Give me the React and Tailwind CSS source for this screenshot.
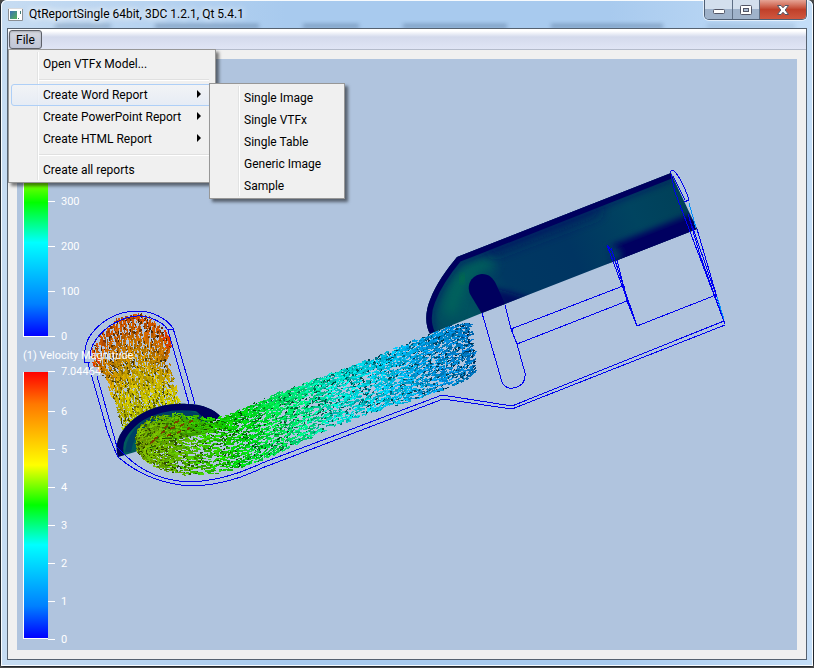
import React from 'react';

const REPORT_ITEMS = ['Single Image', 'Single VTFx', 'Single Table', 'Generic Image', 'Sample'];

const PRESSURE_TICKS = [
  { label: '300', y: 201 },
  { label: '200', y: 246 },
  { label: '100', y: 291 },
  { label: '0', y: 336 },
];

const VELOCITY_TICKS = [
  { label: '7.04464', y: 371 },
  { label: '6', y: 411 },
  { label: '5', y: 449 },
  { label: '4', y: 487 },
  { label: '3', y: 525 },
  { label: '2', y: 563 },
  { label: '1', y: 601 },
  { label: '0', y: 639 },
];

// left and right edge of the inlet flow, top to bottom
const INLET = {
  count: 56,
  step: 2,
  path: (v) => [
    [90 + 82 * v, 352 - 10 * v - 33 * Math.pow(Math.sin(Math.PI * v), 0.8)],
    [95 + 76 * v, 366 - 20 * v],
    [107 + 60 * v, 378 - 18 * v],
    [125 + 59 * v, 436 - 22 * v],
  ],
  colors: [
    [0, [228, 88, 0]],
    [0.2, [218, 118, 0]],
    [0.4, [218, 160, 0]],
    [0.6, [224, 200, 0]],
    [0.85, [212, 218, 0]],
    [1, [140, 205, 0]],
  ],
};

const PIPE_EDGES = [
  [136, 438, 137, 450],
  [140, 427, 148, 462],
  [152, 418, 162, 469],
  [175, 413, 185, 474],
  [200, 418, 208, 474],
  [220, 418, 234, 469],
  [240, 411, 260, 461],
  [260, 402, 284, 450],
  [280, 393, 310, 438],
  [310, 382, 340, 425],
  [340, 371, 372, 413],
  [380, 356, 408, 401],
  [420, 339, 440, 391],
  [450, 326, 462, 382],
  [468, 323, 475, 373],
];

const PIPE = {
  count: 44,
  step: 2,
  path: (v) => PIPE_EDGES.map(([x1, y1, x2, y2]) => [x1 + (x2 - x1) * v, y1 + (y2 - y1) * v]),
  colors: [
    [0, [138, 190, 0]],
    [0.12, [104, 204, 0]],
    [0.22, [40, 222, 0]],
    [0.3, [0, 236, 10]],
    [0.4, [0, 248, 80]],
    [0.5, [0, 250, 150]],
    [0.6, [0, 246, 230]],
    [0.74, [0, 214, 255]],
    [0.86, [0, 172, 250]],
    [1, [0, 125, 210]],
  ],
};

function createRandom(seed) {
  let s = seed;
  return () => {
    s = (s * 1664525 + 1013904223) % 4294967296;
    return s / 4294967296;
  };
}

function colorAt(stops, t) {
  for (let i = 1; i < stops.length; i++) {
    if (t <= stops[i][0]) {
      const [t0, a] = stops[i - 1];
      const [t1, b] = stops[i];
      const f = (t - t0) / (t1 - t0);
      return a.map((c, k) => c + (b[k] - c) * f);
    }
  }
  return stops[stops.length - 1][1];
}

function buildFlow(flow, seed, gap) {
  const rand = createRandom(seed);
  const arrows = [];
  for (let i = 0; i < flow.count; i++) {
    const v = (i + 0.5) / flow.count;
    const points = flow.path(v);
    const lengths = points.slice(1).map((p, k) => Math.hypot(p[0] - points[k][0], p[1] - points[k][1]));
    const total = lengths.reduce((a, b) => a + b, 0);
    let walked = 0;
    lengths.forEach((len, k) => {
      const [x0, y0] = points[k];
      const dx = (points[k + 1][0] - x0) / len;
      const dy = (points[k + 1][1] - y0) / len;
      for (let d = 0; d < len; d += flow.step) {
        const t = (walked + d) / total;
        if (rand() < gap(t, v)) continue;
        const dark = rand() < 0.27;
        const shade = dark ? 0.28 + rand() * 0.35 : 0.74 + rand() * 0.3;
        const size = dark ? 1 + rand() * 2 : 2 + rand() * 4;
        const x = x0 + dx * d + (rand() - 0.5) * 3;
        const y = y0 + dy * d + (rand() - 0.5) * 3;
        const turn = (rand() - 0.5) * 0.5;
        const base = colorAt(flow.colors, Math.min(1, Math.max(0, t + (rand() - 0.5) * 0.05)));
        const rgb = base.map((c) => Math.min(255, Math.round((c * shade) / 12) * 12));
        const seg = `M${x.toFixed(1)} ${y.toFixed(1)}l${((dx - dy * turn) * size).toFixed(1)} ${((dy + dx * turn) * size).toFixed(1)}`;
        arrows.push({ color: `rgb(${rgb.join(',')})`, seg, order: rand() });
      }
      walked += len;
    });
  }
  // mix the depth so that light and dark arrows cover each other
  return arrows.sort((a, b) => a.order - b.order);
}

const inletArrows = buildFlow(INLET, 7, (t, v) => {
  if (t < 0.3) return Math.floor(v * 56) % 5 === 0 ? 0.85 : 0.15;
  return 0.3;
});

const pipeArrows = buildFlow(PIPE, 21, (t, v) => {
  if (t < 0.12 || v < 0.2) return 0.08;
  if (t > 0.78) return Math.floor(v * 44) % 5 === 1 ? 0.85 : 0.3;
  return Math.floor(v * 44 + t * 3) % 4 === 1 ? 0.85 : 0.42;
});

function Arrows({ items }) {
  return (
    <g fill="none" strokeWidth="1.4" shapeRendering="crispEdges">
      {items.map(({ color, seg }, i) => (
        <path key={i} d={seg} stroke={color} />
      ))}
    </g>
  );
}

function Legend({ top, bottom, ticks }) {
  return (
    <g>
      <rect x="24" y={top} width="24" height={bottom - top} fill="url(#rainbow)" />
      <path d={`M23.5 ${top}V${bottom}M23 ${bottom + 0.5}H48`} stroke="#fff" fill="none" />
      {ticks.map(({ label, y }) => (
        <g key={label}>
          <path d={`M48 ${y + 0.5}H55`} stroke="#fff" />
          <text x="61" y={y + 4}>{label}</text>
        </g>
      ))}
    </g>
  );
}

function Scene() {
  return (
    <svg
      viewBox="17 59 780 591"
      preserveAspectRatio="xMinYMin meet"
      className="block h-auto w-full"
      role="img"
      aria-label="Velocity Magnitude"
    >
      <defs>
        <linearGradient id="rainbow" x1="0" y1="0" x2="0" y2="1">
          <stop offset="0" stopColor="#ff0000" />
          <stop offset="0.12" stopColor="#ff7800" />
          <stop offset="0.35" stopColor="#ffff00" />
          <stop offset="0.5" stopColor="#00ff00" />
          <stop offset="0.65" stopColor="#00ffff" />
          <stop offset="0.88" stopColor="#0080ff" />
          <stop offset="1" stopColor="#0000ff" />
        </linearGradient>
        <linearGradient id="cut" gradientUnits="userSpaceOnUse" x1="430" y1="320" x2="690" y2="200">
          <stop offset="0" stopColor="#004a60" />
          <stop offset="0.14" stopColor="#005260" />
          <stop offset="0.3" stopColor="#003862" />
          <stop offset="0.55" stopColor="#003562" />
          <stop offset="0.8" stopColor="#004460" />
          <stop offset="1" stopColor="#004058" />
        </linearGradient>
        <filter id="soft" x="-20%" y="-20%" width="140%" height="140%">
          <feGaussianBlur stdDeviation="3" />
        </filter>
        <filter id="softer" x="-50%" y="-50%" width="200%" height="200%">
          <feGaussianBlur stdDeviation="6" />
        </filter>
        <clipPath id="body">
          <path d="M457 257L671 173L697 229L482 313L430 334C425 325 425 312 430 300C436 284 447 269 457 257Z" />
        </clipPath>
        <clipPath id="elbow">
          <path d="M118 457C113 440 123 428 135 418C150 407 170 403 187 404C203 404 215 410 221 417L200 425L135 452Z" />
        </clipPath>
      </defs>

      {/* outlet cut plane */}
      <g clipPath="url(#body)">
        <rect x="420" y="165" width="285" height="175" fill="url(#cut)" />
        <path d="M450 315Q454 285 472 270Q482 264 494 264" stroke="#006a5a" strokeWidth="9" fill="none" filter="url(#softer)" />
        <path d="M460 283L464 274" stroke="#007838" strokeWidth="3" filter="url(#soft)" />
        <path d="M490 252L600 210" stroke="#002060" strokeWidth="8" filter="url(#softer)" />
        <path d="M492 288L508 292L535 300L505 312Z" fill="#000c5e" filter="url(#soft)" />
        <path d="M612 245L690 214L705 228L612 268Z" fill="#000060" filter="url(#soft)" />
        <path d="M616 248L690 219L705 228L616 262Z" fill="#000060" />
        <path d="M606 245L620 248L622 260L606 264Z" fill="#003562" filter="url(#soft)" />
        <path d="M430 334C425 325 425 312 430 300C436 284 447 269 457 257L671 173" stroke="#000868" strokeWidth="16" fill="none" filter="url(#soft)" opacity="0.45" />
        <path d="M430 334C425 325 425 312 430 300C436 284 447 269 457 257L671 173" stroke="#00005e" strokeWidth="11" fill="none" />
        <path d="M482 314L470 294C466 284 472 275 482 274C489 274 493 278 496 284L506 306Z" fill="#00005e" />
      </g>

      <Arrows items={inletArrows} />
      <path
        d="M94 352l1 5M97 358l2 6M93 362l2 5M98 368l1 4M165 330l2 7M168 336l2 6M170 342l1 5M163 336l2 5M167 344l1 4"
        stroke="#e03800"
        strokeWidth="2"
        shapeRendering="crispEdges"
      />

      {/* elbow cut plane */}
      <g clipPath="url(#elbow)">
        <rect x="110" y="400" width="115" height="60" fill="#005a5c" />
        <path d="M128 452C130 432 150 412 180 411L208 420" stroke="#004064" strokeWidth="6" fill="none" />
        <path d="M118 457C113 440 123 428 135 418C150 407 170 403 187 404C203 404 215 410 221 417" stroke="#00005e" strokeWidth="13" fill="none" />
        <path d="M203 406L222 414L222 420L206 420L196 411Z" fill="#00005e" />
      </g>

      <path d="M137 442L150 424L172 417L205 422L222 424L205 434L170 440L150 452Z" fill="#3a9c00" />
      <Arrows items={pipeArrows} />
      <path
        d="M150 443l5-3M154 439l4-2M161 433l4-2M167 436l4-2M170 429l5-2M177 433l4-2M180 426l4-2M187 429l3-1M164 428l4-2M174 423l5-2M189 422l4-1"
        stroke="#7a4000"
        strokeWidth="2"
        shapeRendering="crispEdges"
      />

      {/* wireframe */}
      <g fill="none" stroke="#0000f0" strokeWidth="1" shapeRendering="crispEdges">
        <path d="M725 325L512 409L443 399L262 468Q228 485 193 486C163 485 138 474 118 457Q113 447 107 430L88 363L84 362C84 352 86 340 92 333C103 319 120 311 137 311C152 311 166 318 173 328L195 404" />
        <path d="M724 321L512 406L442 395L262 463Q225 481 190 482C162 481 140 470 125 455L117 447L97 376" />
        <path d="M84 362L90 362M90 356C90 342 105 326 121 320Q137 313 151 318Q164 323 168 330L189 404M168 330L173 329" />
        <path d="M482 313L502 382Q505 389 513 388Q526 386 525 373L517 344L511 329L505 305" />
        <path d="M511 329L623 286M517 344L627 301M510 326L513 331" />
        <path d="M607 245L637 326L627 301L617 260M607 245L611 250M611 248L623 285L637 326L716 295M622 282L625 288" />
        <path d="M670 173Q672 168 676 173Q684 184 689 200L684 202M673 176L685 200M671 174L675 192L725 324M688 214L716 295M688 214L700 255L725 324M697 229L724 321" />
      </g>
      <path d="M689 203L696 228M717 297L724 319" stroke="#0090ff" shapeRendering="crispEdges" />

      <g fill="#fff" fontSize="11" className="font-[Roboto,'Noto_Sans',sans-serif]">
        <Legend top={69} bottom={336} ticks={PRESSURE_TICKS} />
        <text x="23" y="359">(1) Velocity Magnitude</text>
        <Legend top={372} bottom={638} ticks={VELOCITY_TICKS} />
      </g>
    </svg>
  );
}

function MenuPanel({ children, className }) {
  return (
    <ul
      role="menu"
      className={`absolute border border-[#979797] bg-[#f0f0f0] px-[2px] pt-[3px] pb-px shadow-[3px_3px_3px_rgba(0,0,0,0.5)] ${className}`}
    >
      <li role="none" className="absolute inset-y-[2px] left-7 w-[2px] border-l border-[#e2e3e3] bg-white" />
      {children}
    </ul>
  );
}

function MenuItem({ label, active, submenu, children }) {
  return (
    <li role="none" className="relative">
      <button
        type="button"
        role="menuitem"
        aria-haspopup={submenu ? 'menu' : undefined}
        className={`relative flex h-[22px] w-full items-center justify-between rounded-[3px] border pr-[10px] pl-[31px] text-left whitespace-nowrap ${
          active ? 'border-[#aecff7] bg-linear-to-b from-[#f2f4f7]/80 to-[#e4ebf6]/80' : 'border-transparent'
        }`}
      >
        {label}
        {submenu && (
          <svg width="5" height="8" viewBox="0 0 5 8" className="-mt-[2px]" aria-hidden="true">
            <path d="M0 0L4 4L0 8Z" fill="#000" />
          </svg>
        )}
      </button>
      {children}
    </li>
  );
}

function Separator() {
  return <li role="separator" className="mt-1 mr-1 mb-[3px] ml-7 h-[2px] border-t border-[#e0e0e0] bg-white" />;
}

function FileMenu() {
  return (
    <MenuPanel className="top-full left-0 z-10 w-[208px]">
      <MenuItem label="Open VTFx Model..." />
      <Separator />
      <MenuItem label="Create Word Report" active submenu>
        <MenuPanel className="-top-px left-[198px] z-20 w-[136px]">
          {REPORT_ITEMS.map((item) => (
            <MenuItem key={item} label={item} />
          ))}
        </MenuPanel>
      </MenuItem>
      <MenuItem label="Create PowerPoint Report" submenu />
      <MenuItem label="Create HTML Report" submenu />
      <Separator />
      <MenuItem label="Create all reports" />
    </MenuPanel>
  );
}

function TitleBar() {
  return (
    <header className="relative flex h-[27px] items-start justify-between">
      {/* desktop showing through the glass */}
      <div className="absolute inset-x-0 bottom-0 flex h-2 gap-11 overflow-hidden pt-1 pl-12" aria-hidden="true">
        <span className="w-14 bg-[#4c6c90]/40 blur-[2px]" />
        <span className="w-26 bg-[#4c6c90]/50 blur-[2px]" />
        <span className="w-14 bg-[#4c6c90]/50 blur-[2px]" />
        <span className="w-26 bg-[#4c6c90]/50 blur-[2px]" />
        <span className="w-28 bg-[#4c6c90]/50 blur-[2px]" />
        <span className="w-22 bg-[#4c6c90]/20 blur-[2px]" />
      </div>
      <div className="relative flex items-center gap-[6px] pt-[4px]">
        <svg width="15" height="13" viewBox="0 0 15 13" className="ml-px" aria-hidden="true">
          <defs>
            <linearGradient id="appicon" x1="0" y1="0" x2="1" y2="1">
              <stop offset="0" stopColor="#3b70b8" />
              <stop offset="1" stopColor="#55b054" />
            </linearGradient>
          </defs>
          <path d="M0.5 0.5H14.5V12.5H0.5Z" fill="#fff" stroke="#8b8f94" />
          <path d="M0 0.5H15" stroke="#d8dadd" />
          <rect x="2" y="3" width="7" height="8" fill="url(#appicon)" />
          <path d="M10 10.5H11M12.5 3V6" stroke="#3f7a74" />
        </svg>
        <h1 className="text-xs leading-[18px] text-black [text-shadow:0_0_6px_#fff,0_0_10px_#fff]">
          QtReportSingle 64bit, 3DC 1.2.1, Qt 5.4.1
        </h1>
      </div>
      <div className="relative -mt-px flex h-5 overflow-hidden rounded-b-[5px] border border-t-0 border-[#4f5f74] shadow-[0_0_0_1px_rgba(255,255,255,0.6)]">
        <button
          type="button"
          aria-label="Minimize"
          className="flex w-7 items-center justify-center border-r border-[#5f6f85] bg-linear-to-b from-[#d3dfed] from-45% to-[#9fb2ca] to-50%"
        >
          <svg width="12" height="5" viewBox="0 0 12 5" className="mt-1" aria-hidden="true">
            <rect x="0.5" y="0.5" width="11" height="4" rx="1" fill="#fff" stroke="#535666" />
          </svg>
        </button>
        <button
          type="button"
          aria-label="Maximize"
          className="flex w-[27px] items-center justify-center border-r border-[#5f6f85] bg-linear-to-b from-[#d3dfed] from-45% to-[#9fb2ca] to-50%"
        >
          <svg width="12" height="10" viewBox="0 0 12 10" aria-hidden="true">
            <rect x="0.5" y="0.5" width="11" height="9" rx="1" fill="#fff" stroke="#535666" />
            <rect x="3.5" y="3.5" width="5" height="3" fill="#a9bbd2" stroke="#535666" />
          </svg>
        </button>
        <button
          type="button"
          aria-label="Close"
          className="flex w-[46px] items-center justify-center bg-linear-to-b from-[#e5a496] via-[#c0402a] via-50% to-[#d0573f]"
        >
          <svg width="12" height="10" viewBox="0 0 12 10" aria-hidden="true">
            <path
              d="M0.5 0.5H4L6 2.8L8 0.5H11.5L8.2 5L11.5 9.5H8L6 7.2L4 9.5H0.5L3.8 5Z"
              fill="#fff"
              stroke="#535666"
            />
          </svg>
        </button>
      </div>
    </header>
  );
}

export default function App() {
  return (
    <div className="flex min-h-screen flex-col bg-[#4a4a4a] pb-px font-[Roboto,'Noto_Sans',sans-serif] text-xs text-black">
      <div className="flex flex-1 flex-col rounded-t-md rounded-b-sm border-x border-b border-[#20262e] bg-[#bcdcfa]">
        <div className="flex flex-1 flex-col rounded-t-md border border-white/90 bg-[linear-gradient(90deg,#c6dcf2,#a8caee_35%,#a8caee_75%,#c4def8)] px-[5px] pb-[5px]">
          <TitleBar />
          <div className="flex flex-1 flex-col border border-[#566270] bg-[#f0f0f0]">
            <nav className="flex h-[21px] items-end border-b border-[#b4bbcb] bg-linear-to-b from-white from-10% via-[#d4daec] via-40% to-[#e0e5f5]">
              <div className="relative">
                <button
                  type="button"
                  aria-haspopup="menu"
                  aria-expanded="true"
                  className="ml-px flex h-[19px] items-center rounded-[3px] border border-[#5d6068] bg-linear-to-b from-[#d5d8e0] to-[#c0c6d8] px-[6px] shadow-[inset_0_1px_2px_rgba(0,0,0,0.2)]"
                >
                  File
                </button>
                <FileMenu />
              </div>
            </nav>
            <main className="m-[9px] flex-1 bg-[#b0c4de]">
              <Scene />
            </main>
          </div>
        </div>
      </div>
    </div>
  );
}
